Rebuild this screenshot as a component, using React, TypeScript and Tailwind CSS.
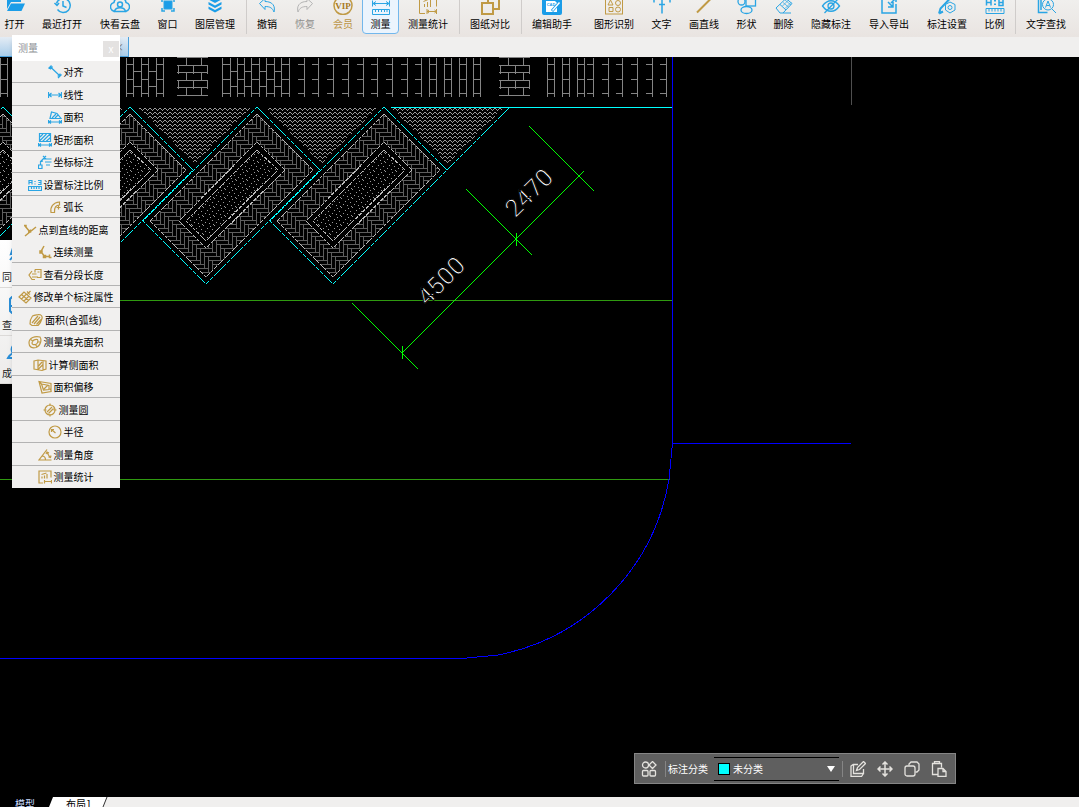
import React from "react";

const BLUE = "#2aa5e4";
const GOLD = "#c09a45";

type Tool = {
  label: string;
  size: "w-[37px]" | "w-[38px]" | "w-[48px]" | "w-[58px]" | "ml-1 w-[58px]";
  color?: string;
  text?: string;
  active?: boolean;
  icon: React.ReactNode;
};

const toolGroups: Tool[][] = [
  [
    {
      label: "打开",
      size: "w-[37px]",
      icon: (
        <g fill="#1b9de8" stroke="none">
          <path d="M2 14V3h6l2 2h6v2H6z" />
          <path d="M6 8.500h14L16.500 16H2z" />
        </g>
      ),
    },
    {
      label: "最近打开",
      size: "w-[58px]",
      icon: (
        <g strokeWidth="1.500">
          <path d="M4.500 8.500a7 7 0 1 1 1 6" />
          <path d="M2.500 8l2.500 2.500L7 8M11 6v5l3.500 1.500" />
        </g>
      ),
    },
    {
      label: "快看云盘",
      size: "w-[58px]",
      icon: (
        <g strokeWidth="1.500">
          <path d="M4.500 16.500C-1 15-.5 8.500 4 7.500 5 1 15 1 16 7.500c4.500 1 5 7.500-.5 9" />
          <circle cx="10" cy="9.500" r="2.500" />
          <path d="M4.500 16.500c1-5 10-5 11 0z" />
        </g>
      ),
    },
    {
      label: "窗口",
      size: "w-[37px]",
      icon: (
        <g>
          <rect x="6" y="6" width="8" height="8" fill="#1b9de8" />
          <path d="M4 7V4h3M13 4h3v3M4 13v3h3M16 13v3h-3" strokeWidth="1.500" />
        </g>
      ),
    },
    {
      label: "图层管理",
      size: "w-[58px]",
      icon: (
        <g fill="#1b9de8" stroke="none">
          <path d="M10 1l6.500 3.500L10 8 3.500 4.500z" />
          <path d="M3.500 7L10 10.500 16.500 7v2.500L10 13 3.500 9.500z" />
          <path d="M3.500 11.500L10 15l6.500-3.500V14L10 17.500 3.500 14z" />
        </g>
      ),
    },
  ],
  [
    {
      label: "撤销",
      size: "w-[38px]",
      icon: (
        <path d="M2.500 8.500L8 3.500v3c8 0 10.500 5 9 10.500-1.500-4-4-5.500-9-5.500v3z" />
      ),
    },
    {
      label: "恢复",
      size: "w-[38px]",
      color: "#b5b5b5",
      text: "text-[#8f8f8d]",
      icon: (
        <path d="M17.500 8.500L12 3.500v3c-8 0-10.500 5-9 10.500 1.500-4 4-5.500 9-5.500v3z" />
      ),
    },
    {
      label: "会员",
      size: "w-[38px]",
      color: GOLD,
      text: "text-[#bb9547]",
      icon: (
        <g>
          <circle cx="10" cy="10.500" r="9" strokeWidth="1.500" />
          <text
            x="10"
            y="14"
            textAnchor="middle"
            fontSize="9"
            fontWeight="700"
            fontFamily="Liberation Serif, serif"
            fill="#a87a22"
            stroke="none"
          >
            VIP
          </text>
        </g>
      ),
    },
    {
      label: "测量",
      size: "w-[37px]",
      active: true,
      icon: (
        <g>
          <path d="M1.500 5.500v6M18.500 5.500v6M2 8.500h16M5 6.500l-3 2 3 2M15 6.500l3 2-3 2" />
          <path d="M1.500 14.500h17v5h-17zM4.500 15v2M7.500 15v2M10.500 15v2M13.500 15v2M16 15v2" />
        </g>
      ),
    },
    {
      label: "测量统计",
      size: "w-[58px]",
      color: GOLD,
      icon: (
        <g>
          <path d="M7 18.500H1.500V1.500h17v10M9 14v5M18.500 14v5M9 16.500h9.500M11 15l-2 1.500 2 1.500M16.500 15l2 1.500-2 1.500" />
          <path d="M6.500 12V9M9.500 12V7M12.500 12V5M5.500 6.500l7-3" />
        </g>
      ),
    },
  ],
  [
    {
      label: "图纸对比",
      size: "w-[58px]",
      color: GOLD,
      icon: (
        <g strokeWidth="2">
          <path d="M8 8V2h11v12h-5" />
          <rect x="2" y="8" width="11" height="11" />
        </g>
      ),
    },
  ],
  [
    {
      label: "编辑助手",
      size: "w-[58px]",
      icon: (
        <g>
          <rect x="0" y="-2" width="20" height="22" rx="2" fill="#1b9de8" stroke="none" />
          <path d="M4 6h9l2 2v9H4z" fill="#fff" stroke="none" />
          <text
            x="9"
            y="11"
            textAnchor="middle"
            fontSize="4"
            fontWeight="700"
            fontFamily="Liberation Sans, sans-serif"
            fill="#1b9de8"
            stroke="none"
          >
            CAD
          </text>
          <path d="M10 16l7-8" stroke="#1b9de8" strokeWidth="3" />
          <path d="M10.500 15.500l7-8" stroke="#fff" strokeWidth="1.500" />
        </g>
      ),
    },
    {
      label: "图形识别",
      size: "ml-1 w-[58px]",
      color: GOLD,
      icon: (
        <g>
          <rect x="1.500" y="1.500" width="17" height="17.500" />
          <path d="M4 10l2.500-5L9 10zM5 12.500h4v4H5z" />
          <circle cx="14" cy="8" r="2.500" />
          <circle cx="14" cy="14.500" r="2.500" />
        </g>
      ),
    },
    {
      label: "文字",
      size: "w-[37px]",
      icon: (
        <g strokeWidth="1.500">
          <path d="M2 7.500V4h16v3.500M10 4v14.500M7 9.500h6" />
        </g>
      ),
    },
    {
      label: "画直线",
      size: "w-[48px]",
      color: GOLD,
      icon: <path d="M3 17.500L18 2.500" strokeWidth="2" />,
    },
    {
      label: "形状",
      size: "w-[37px]",
      icon: (
        <g strokeWidth="1.300">
          <rect x="9" y="1.500" width="9.500" height="9.500" />
          <circle cx="4.500" cy="6.500" r="3.500" />
          <ellipse cx="9.500" cy="15" rx="5.500" ry="3.500" />
        </g>
      ),
    },
    {
      label: "删除",
      size: "w-[37px]",
      icon: (
        <g>
          <path d="M2 13L12 3.500l6 5L9 18H6zM6 9.500l6 5.500M9 18h8" />
          <path d="M9 7.500l6 5M11 5l6 5M14.500 5l-6 6M17 7.500l-6 6" strokeWidth=".7" />
        </g>
      ),
    },
    {
      label: "隐藏标注",
      size: "w-[58px]",
      icon: (
        <g strokeWidth="1.300">
          <path d="M1.500 11c5-7 12-7 17 0-5 7-12 7-17 0z" />
          <circle cx="10" cy="11" r="3" />
          <path d="M3.500 18L17 4" />
        </g>
      ),
    },
    {
      label: "导入导出",
      size: "w-[58px]",
      icon: (
        <g strokeWidth="1.500">
          <path d="M9 3.500H3v14.500h14V9M9 7l5 5M14 7v5H9M17 3l-5 5M13 3h4v4" />
        </g>
      ),
    },
    {
      label: "标注设置",
      size: "w-[58px]",
      icon: (
        <g>
          <path d="M2 18.500l1.500-5L14 2.500l3 2M2 18.500l4-2" strokeWidth="2" />
          <path d="M13 7l5 2.500v5.500l-5 3-4.500-3V9.500z" />
          <circle cx="13" cy="12.500" r="2" />
        </g>
      ),
    },
    {
      label: "比例",
      size: "w-[37px]",
      icon: (
        <g>
          <path d="M1.500 10.500V4h4.500v6.500M1.500 7.500H6M14 4h4v6.500h-4zM14 7.500h4" strokeWidth="1.500" />
          <path d="M10 5v1.500M10 8.500V10" strokeWidth="2" />
          <path d="M1 13.500h18v5H1zM4 14v2.500M7 14v2.500M10 14v2.500M13 14v2.500M16 14v2.500" />
        </g>
      ),
    },
  ],
  [
    {
      label: "文字查找",
      size: "w-[58px]",
      icon: (
        <g>
          <path d="M18 5V1.500H2.500v16h9M5 4v11" strokeWidth="1.500" />
          <circle cx="12" cy="9.500" r="5.500" />
          <path d="M9.500 12.500L12 6l2.500 6.500M10.500 10.500h3M16 14l4 4" />
        </g>
      ),
    },
  ],
];

type MeasureItem = { label: string; color: string; icon: React.ReactNode };

const measureItems: MeasureItem[] = [
  {
    label: "对齐",
    color: BLUE,
    icon: <path d="M.5 3.500l3-3M10 13l3.500-3.500M2.500 2l9.500 9M2.500 4.500V2H5M12 8.500V11H9.500" />,
  },
  {
    label: "线性",
    color: BLUE,
    icon: <path d="M.5 4v6M13.500 4v6M1 7h12M3.500 5L1 7l2.500 2M10.500 5L13 7l-2.500 2" />,
  },
  {
    label: "面积",
    color: BLUE,
    icon: (
      <path d="M2 8.500L3.500 2 9 3.500l4 5zM4 8l4-4M7 8l3-3M.5 10v3.500M13.500 10v3.500M1 12h12M3 10.500L1 12l2 1.500M11 10.500l2 1.500-2 1.500" />
    ),
  },
  {
    label: "矩形面积",
    color: BLUE,
    icon: (
      <path d="M1.500.5h11v8h-11zM2 4l3-3M2 7.500L8.500 1M4.500 8.500L12 1M8 8.500l4.500-4M.5 10v3.500M13.500 10v3.500M1 12h12M3 10.500L1 12l2 1.500M11 10.500l2 1.500-2 1.500" />
    ),
  },
  {
    label: "坐标标注",
    color: BLUE,
    icon: <path d="M.5 10h3.500v3.500H.5zM2.500 10V6.500L5 4h8.500M5 1l3 3M8 1L5 4M7 7h6.500M8 10h4M2 7l3-1" />,
  },
  {
    label: "设置标注比例",
    color: BLUE,
    icon: (
      <path d="M1 6.500v-4h3v4M1 4.500h3M7 3v1M7 5.500v1M10 2.500h3v4h-3M10.500 4.500H13M.5 8.500h13v4H.5zM3.500 9v2M6 9v2M8.500 9v2M11 9v2" />
    ),
  },
  {
    label: "弧长",
    color: GOLD,
    icon: <path d="M3 12.500C2 7 5 2.500 11.500 2v3C8 5 6 7.500 6.500 12.500zM8.500 7.500h4M10.500 5.500v4" />,
  },
  {
    label: "点到直线的距离",
    color: GOLD,
    icon: <path d="M2 13L13 4M2 3l5 6M5 9h2.500V6.500M1 2.500h2v2" strokeWidth="1.500" />,
  },
  {
    label: "连续测量",
    color: GOLD,
    icon: <path d="M6 1L3 6.500l3.500 5H12M2 6h2v2H2zM5.500 10.500h2v2h-2zM11.500 9.500v3h2" strokeWidth="1.500" />,
  },
  {
    label: "查看分段长度",
    color: GOLD,
    icon: <path d="M7 1.500h6v8H9M7 1.500v3M4 3L1 7l3 4.500h3M8.500 6H4M4 9h6M9.500 4h2" />,
  },
  {
    label: "修改单个标注属性",
    color: GOLD,
    icon: <path d="M1 7l5-5 7 6-5 5zM3.500 4.500l7 6M8.500 4l-5 5M11 6l-5 5M9 1.500l3 3M12.500 1L9 4.500" />,
  },
  {
    label: "面积(含弧线)",
    color: GOLD,
    icon: <path d="M1 11c0-4 1-6 2.500-8 2-1 4-1 6-1.500 3 0 4 2 3.500 4-.5 2-2 5-4 7H3zM3 10l6-7M5 11l6-7M7.500 11.500l4.500-5" />,
  },
  {
    label: "测量填充面积",
    color: GOLD,
    icon: (
      <g>
        <path d="M1 8c0-5 6-7.500 11-6 2 3 .5 9-4 10.500C4 13.500 1 12 1 8z" />
        <path d="M4 8c0-2.500 3-4 5.500-3.500 1 1.500 0 4.500-2 5C5.500 10 4 9.500 4 8zM2.500 4.500L5 6M9 12L7.500 9.500M12 7H9.500" />
      </g>
    ),
  },
  {
    label: "计算侧面积",
    color: GOLD,
    icon: <path d="M1 3l4-1 8 1v8l-4 1.500L1 11zM5 2v10M10 3v9M5.500 8L9 4M5.500 11L10 6.500" />,
  },
  {
    label: "面积偏移",
    color: GOLD,
    icon: <path d="M1 1.500l12 2v8l-9 1.500zM3.500 4l7.500 1.500v4L5.500 10zM6 9l4-4M1 1.500l2.500 2.500M12 8.500l1.500 3" />,
  },
  {
    label: "测量圆",
    color: GOLD,
    icon: (
      <g>
        <circle cx="7" cy="7" r="5" />
        <path d="M.5 7h3M10.500 7h3M7 .5V3M7 11v2.500M4 9l5-5M5.500 10.500l5-5" />
      </g>
    ),
  },
  {
    label: "半径",
    color: GOLD,
    icon: (
      <g>
        <circle cx="7" cy="7" r="6" />
        <path d="M7.500 8L3.500 4.500M3.500 7V4.500H6" />
      </g>
    ),
  },
  {
    label: "测量角度",
    color: GOLD,
    icon: <path d="M9 1.500L1 12h12.500M4 8c2 0 3.500 1.500 3.500 4M9 4.500l3 5M8 6l1-2 2 1M10.500 9l2 .5.5-2" />,
  },
  {
    label: "测量统计",
    color: GOLD,
    icon: (
      <path d="M5 13H1V1h12v6.500M4 8.500V6.500M6.500 8.500v-3M9 8.500V4M3.500 4.500L8.500 3M6.500 10v3.500M13.500 10v3.500M7 11.500h6" />
    ),
  },
];

const ToolButton: React.FC<{ tool: Tool }> = ({ tool }) => (
  <button
    type="button"
    className={`${tool.size} ${tool.text ?? "text-black"} ${
      tool.active
        ? "border-[#72b7ec] bg-[#ebf4fd]"
        : "border-transparent"
    } flex h-11 shrink-0 flex-col items-center gap-px rounded-sm border pt-1 text-[10px] leading-4 whitespace-nowrap`}
  >
    <svg
      width="20"
      height="20"
      viewBox="0 0 20 20"
      fill="none"
      stroke={tool.color ?? BLUE}
      className="shrink-0"
      aria-hidden="true"
    >
      {tool.icon}
    </svg>
    {tool.label}
  </button>
);

const Toolbar: React.FC = () => (
  <header className="flex h-[37px] shrink-0 items-end overflow-hidden bg-gradient-to-b from-[#f0efed] to-[#e9e4e1] pb-[3px]">
    <div className="-ml-1 flex items-end">
      {toolGroups.map((group, i) => (
        <React.Fragment key={i}>
          {i > 0 && (
            <span className="mr-px ml-0.5 h-9 w-px shrink-0 bg-[#cfccca]" />
          )}
          {group.map((tool) => (
            <ToolButton key={tool.label} tool={tool} />
          ))}
        </React.Fragment>
      ))}
    </div>
  </header>
);

const MeasurePanel: React.FC = () => (
  <section
    aria-label="测量"
    className="absolute top-[35px] left-3 w-[108px] bg-[#f1f0ef] shadow-md"
  >
    <div className="flex h-[26px] items-center justify-between bg-white pr-px pl-1.5">
      <h2 className="text-[10px] leading-4 text-[#8d9094]">测量</h2>
      <button
        type="button"
        aria-label="关闭"
        className="mt-0.5 flex size-4 items-center justify-center bg-[#e4e2e1] text-[10px] leading-4 text-white"
      >
        x
      </button>
    </div>
    <ul>
      {measureItems.map((item) => (
        <li
          key={item.label}
          className="h-[22px] border-b border-[#b3b3b3] last:border-transparent even:h-[23px] nth-[8]:border-transparent"
        >
          <button
            type="button"
            className="flex h-full w-full items-center justify-center gap-0.5 pt-px pr-px text-[10px] leading-4 whitespace-nowrap text-black"
          >
            <svg
              width="14"
              height="14"
              viewBox="0 0 14 14"
              fill="none"
              stroke={item.color}
              strokeWidth="1.200"
              className="shrink-0"
              aria-hidden="true"
            >
              {item.icon}
            </svg>
            {item.label}
          </button>
        </li>
      ))}
    </ul>
  </section>
);

const sideTools = [
  { label: "同", icon: <path d="M15 1l-2 6 3-1M16 8l-4 5" /> },
  { label: "查", icon: <path d="M16 2h-2l-2 2v12l2 2h2M12 11h4" /> },
  { label: "成", icon: <path d="M16 2c-3 2-3 6-1 8-2 1-4 3-5 5h6" /> },
];

const SideDock: React.FC = () => (
  <nav className="absolute top-[240px] left-0 w-3 overflow-hidden bg-gradient-to-b from-white to-[#ecebea]">
    {sideTools.map((tool) => (
      <button
        key={tool.label}
        type="button"
        className="flex h-12 w-full flex-col items-end justify-end border-b border-[#dcdad8] text-[10px] leading-5 text-[#222]"
      >
        <svg
          width="12"
          height="20"
          viewBox="2 0 12 20"
          fill="none"
          stroke="#2b8fd8"
          strokeWidth="2"
          aria-hidden="true"
        >
          {tool.icon}
        </svg>
        {tool.label}
      </button>
    ))}
  </nav>
);

// Vertical pavers along the top edge: x of every joint, and how it is rungged.
const joints = [0, 7, 126, 133, 141, 148, 156, 163, 222, 230, 237, 244, 251, 259, 266, 274, 281, 289, 429, 436, 444, 451, 459, 466, 473, 480, 547, 554, 562, 569, 577, 584];
const wideJoints = [304, 318, 333, 348, 363, 377, 392, 407, 421, 593, 608, 622, 637, 652, 666];

const paverPath = () => {
  let d = "";
  joints.forEach((x, i) => {
    d += `M${x} 57V96`;
    const next = joints[i + 1];
    if (!next || next - x > 9) return;
    const rungs = i % 2 === 0 ? [64, 79, 93] : x < 300 ? [71, 86] : [];
    rungs.forEach((y) => (d += `M${x} ${y}H${next}`));
  });
  wideJoints.forEach((x) => {
    d += `M${x} 57V96`;
    [64, 79, 93].forEach((y) => (d += `M${x - 7} ${y}H${x}`));
  });
  return d;
};

const brickPath = (x: number) => {
  let d = "";
  [57, 65, 72, 80, 87, 95].forEach((y, i) => {
    d += `M${x} ${y}H${x + 31}`;
    if (i === 5) return;
    const cols = i % 2 === 0 ? [x + 10, x + 25] : [x + 2, x + 17, x + 31];
    cols.forEach((c) => (d += `M${c} ${y}V${y + 8}`));
  });
  return d;
};

// 3:1 herringbone, repeating every six brick widths.
const W = 4;
const herringbonePath = () => {
  let d = "";
  for (let k = -6; k < 12; k++) {
    for (const shift of [-12, -6, 0, 6]) {
      const x = (k + shift) * W;
      const y = k * W;
      d += `M${x} ${y}h${3 * W}v${W}h${-3 * W}z`;
      d += `M${x + 3 * W} ${y - 2 * W}h${W}v${3 * W}h${-W}z`;
    }
  }
  return d;
};

const planters = [-254, -127, 0, 127];

const Drawing: React.FC = () => (
  <svg className="block h-full w-full" fill="none" shapeRendering="crispEdges" role="img" aria-label="图纸">
    <defs>
      <pattern id="herringbone" width="24" height="24" patternUnits="userSpaceOnUse">
        <path d={herringbonePath()} stroke="#5e5e5e" transform="translate(.5 .5)" />
      </pattern>
      <pattern id="dots" width="11" height="9" patternUnits="userSpaceOnUse">
        <path d="M1 1.500h1M5 .5h1M9 3.500h1M3 4.500h1M7 6.500h1M0 7.500h1M4 8.500h1" stroke="#9a9a9a" />
      </pattern>
      <pattern id="waves" width="5" height="4" patternUnits="userSpaceOnUse">
        <path d="M0 .5h1M1 1.500h1M2 2.500h1M3 1.500h1M4 .5h1" stroke="#9a9a9a" />
      </pattern>
    </defs>

    {/* Canvas starts 57px below the top of the window */}
    <g transform="translate(0 -57)">
      <g transform="translate(.5 .5)" stroke="#858585">
        <path d={paverPath()} />
        <path d={brickPath(176)} />
        <path d={brickPath(498)} />
      </g>

      <path d="M10 107h114L67 164zM137 107h114L194 164zM264 107h114L321 164zM391 107h114L447 164z" fill="url(#waves)" />

      {planters.map((x) => (
        <g key={x} transform={`translate(${x} 0)`}>
          <path d="M257 114l56 56-107 107-56-56z" fill="#000" />
          <path
            d="M257 114l56 56-107 107-56-56zM257 142l-78 79 27 27 79-78z"
            fill="url(#herringbone)"
            fillRule="evenodd"
          />
          <path d="M257 150l21 20-72 71-20-20z" fill="url(#dots)" />
          <path
            d="M257 114l56 56-107 107-56-56zM257 142l28 28-79 78-27-27zM257 150l21 20-72 71-20-20z"
            stroke="#bdbdbd"
            strokeDasharray="4 1"
          />
          <path
            d="M257 107l63 63-114 114-63-63z"
            stroke="#00ffff"
            strokeDasharray="5 1"
          />
        </g>
      ))}
      <path d="M391 107.500H672" stroke="#00ffff" />
      <path d="M510 107L447 170" stroke="#00ffff" strokeDasharray="5 1" />

      <path d="M0 300.500H672M0 479.500H670" stroke="#2f9a10" />
      <path d="M851.500 57V105" stroke="#4f4f4f" />
      <g stroke="#0000ff">
        <path d="M672.500 57V443.500M672 443.500H851M0 658.500H462" />
        <path d="M672.500 443.500L669 479A215 215 0 0 1 498 655L462 658.500" />
      </g>

      <g stroke="#00ff00">
        <path d="M352 303l66 66M466 189l66 66M529 126l65 65M402 353L584 171" />
        <path d="M402.500 346v13M516.500 233v13" />
      </g>
      <g
        fill="#fff"
        stroke="#000"
        fontSize="25"
        fontFamily="Roboto, sans-serif"
        textAnchor="middle"
      >
        <text transform="translate(447 287) rotate(-45)">4500</text>
        <text transform="translate(535 199) rotate(-45)">2470</text>
      </g>
    </g>
  </svg>
);

const CategoryBar: React.FC = () => (
  <div className="absolute right-[123px] bottom-[13px] flex h-[31px] w-[322px] items-center border border-[#858585] bg-[#5f5f5f] text-[10px] text-white">
    <button type="button" aria-label="分类管理" className="ml-1.5 flex">
      <svg width="16" height="16" viewBox="0 0 16 16" fill="none" stroke="#e4e2de" strokeWidth="1.300">
        <circle cx="4.500" cy="4" r="3" />
        <path d="M11.500 .5L15 4l-3.500 3.500L8 4z" />
        <rect x="1.500" y="9.500" width="5.500" height="5.500" rx="1" />
        <rect x="9" y="9.500" width="5.500" height="5.500" rx="1" />
      </svg>
    </button>
    <span className="mr-0.5 ml-2 h-4 w-px bg-[#858585]" />
    <label htmlFor="category" className="whitespace-nowrap">
      标注分类
    </label>
    <div className="relative ml-1.5 flex-1">
      <span className="absolute top-1.5 left-1 size-3 border border-black bg-[#00ffff]" />
      <select
        id="category"
        className="block h-6 w-full appearance-none border-y border-black bg-[#5f5f5f] pl-[19px] text-[10px] text-white"
      >
        <option>未分类</option>
      </select>
      <span className="pointer-events-none absolute top-[9px] right-1 border-x-4 border-t-[6px] border-x-transparent border-t-white" />
    </div>
    <span className="mr-[7px] ml-[3px] h-4 w-px bg-[#858585]" />
    <div className="mr-2 flex gap-[11px]">
      <button type="button" aria-label="编辑">
        <svg width="16" height="16" viewBox="0 0 16 16" fill="none" stroke="#e4e2de" strokeWidth="1.300">
          <path d="M8 3.500H3.500v9h10V8M3 3.500L1 5v10.500h10.500l2-3" />
          <path d="M6.500 9.500l1-3 6-6 2 2-6 6z" />
        </svg>
      </button>
      <button type="button" aria-label="移动">
        <svg width="16" height="16" viewBox="0 0 16 16" fill="none" stroke="#e4e2de" strokeWidth="1.500">
          <path d="M8 1v14M1 8h14M5.500 3.500L8 1l2.500 2.500M5.500 12.500L8 15l2.500-2.500M3.500 5.500L1 8l2.500 2.500M12.500 5.500L15 8l-2.500 2.500" />
        </svg>
      </button>
      <button type="button" aria-label="复制">
        <svg width="16" height="16" viewBox="0 0 16 16" fill="none" stroke="#e4e2de" strokeWidth="1.300">
          <rect x="1" y="5" width="10" height="10" rx="2" />
          <path d="M5 4.500V3l2-2h6l2 2v6l-2 2h-1.500" />
        </svg>
      </button>
      <button type="button" aria-label="粘贴">
        <svg width="16" height="16" viewBox="0 0 16 16" fill="none" stroke="#e4e2de" strokeWidth="1.300">
          <path d="M6.500 13.500H1.500v-11h9v4M3.500 2.500v-2h5v2zM7 7.500h5l3 3v5H7zM12 7.500v3h3" />
        </svg>
      </button>
    </div>
  </div>
);

const App: React.FC = () => {
  return (
    <div className="relative flex h-screen flex-col overflow-hidden bg-black font-['Noto_Sans_CJK_SC',sans-serif]">
      <Toolbar />

      {/* Document tabs */}
      <div className="flex h-5 shrink-0 bg-[#f0efee]">
        <div className="flex w-[129px] items-center justify-end border-r border-b border-[#4aa0dc] bg-gradient-to-b from-[#e4ecf4] to-[#a9cdea] pr-1 text-[10px] text-[#777]">
          ×
        </div>
      </div>

      <main className="relative min-h-0 flex-1">
        <Drawing />
        <CategoryBar />
      </main>

      {/* Layout tabs */}
      <footer className="flex h-2.5 shrink-0 items-start overflow-hidden bg-[#f0efee] text-[10px] leading-3">
        <button type="button" className="bg-black pt-px pr-3.5 pl-[15px] text-[#c9dcff]">
          模型
        </button>
        <svg width="5" height="10" viewBox="0 0 5 10" className="bg-white" aria-hidden="true">
          <path d="M0 0h4L0 10z" fill="#000" />
        </svg>
        <button type="button" className="bg-white pt-px pr-2 pl-3 text-black">
          布局1
        </button>
        <svg width="8" height="10" viewBox="0 0 8 10" fill="none" stroke="#333" aria-hidden="true">
          <path d="M0 0h7L3 10H0z" fill="#fff" stroke="none" />
          <path d="M3 10L7 0" />
        </svg>
      </footer>

      <SideDock />
      <MeasurePanel />
    </div>
  );
};

export default App;
